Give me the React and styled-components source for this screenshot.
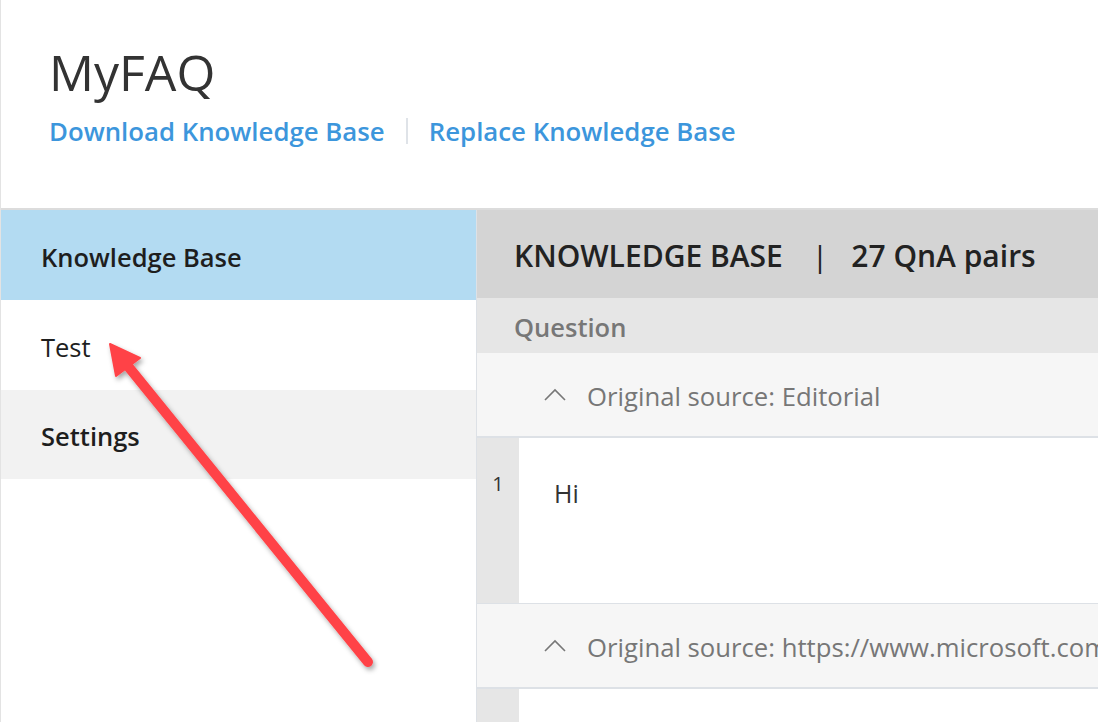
import React from "react";
import styled, { createGlobalStyle } from "styled-components";

const Global = createGlobalStyle`
  html, body { margin: 0; padding: 0; background: #fff; }
  body { font-family: "Open Sans", "Noto Sans", sans-serif; overflow: hidden; }
  * { box-sizing: border-box; }
`;

const Page = styled.div`
  position: relative;
  width: 1098px;
  height: 722px;
  overflow: hidden;
  border-left: 1px solid #e3e3e3;
  display: flex;
  flex-direction: column;
`;

const Header = styled.header`
  height: 210px;
  flex: none;
  padding: 39px 0 0 48px;
  border-bottom: 2px solid #dcdcdc;
`;

const Title = styled.h1`
  margin: 0;
  font-weight: 400;
  font-size: 50px;
  line-height: 66px;
  color: #333;
`;

const Links = styled.div`
  display: flex;
  align-items: center;
  margin-top: 8px;
  gap: 21px;
`;

const Link = styled.a`
  font-size: 25.8px;
  font-weight: 600;
  color: #3c96dc;
  text-decoration: none;
`;

const Sep = styled.span`
  width: 2px;
  height: 26px;
  background: #dfe3e8;
`;

const Body = styled.div`
  flex: 1;
  display: flex;
  min-height: 0;
`;

const Sidebar = styled.nav`
  width: 476px;
  flex: none;
  border-right: 1px solid #dde1e6;
  display: flex;
  flex-direction: column;
`;

const NavItem = styled.div`
  height: ${(p) => p.$h}px;
  display: flex;
  align-items: center;
  padding: 3px 0 0 40px;
  font-size: 25.5px;
  font-weight: ${(p) => (p.$bold ? 600 : 400)};
  color: #1e1e1e;
  background: ${(p) => p.$bg};
`;

const Main = styled.section`
  flex: 1;
  display: flex;
  flex-direction: column;
  min-width: 0;
  overflow: hidden;
`;

const TableHead = styled.div`
  height: 88px;
  flex: none;
  background: #d4d4d4;
  display: flex;
  align-items: center;
  padding: 3px 0 0 37px;
  font-size: 30px;
  font-weight: 600;
  color: #222;
  white-space: nowrap;
`;

const Pipe = styled.span`
  margin: 0 23px 0 29px;
  font-weight: 400;
`;

const ColHead = styled.div`
  height: 55px;
  flex: none;
  background: #e6e6e6;
  display: flex;
  align-items: center;
  padding: 2px 0 0 37px;
  font-size: 25.5px;
  font-weight: 600;
  color: #777;
`;

const SourceRow = styled.div`
  height: 85px;
  flex: none;
  background: #f6f6f6;
  border-bottom: 2px solid #dde1e6;
  display: flex;
  align-items: center;
  padding: 4px 0 0 67px;
  gap: 21px;
  font-size: 25.7px;
  color: #777;
  white-space: nowrap;
  overflow: hidden;
`;

const ChevronIcon = styled.svg`
  flex: none;
  margin-top: -4px;
`;

const QnaRow = styled.div`
  height: ${(p) => p.$h}px;
  flex: none;
  display: flex;
  border-bottom: ${(p) => (p.$last ? "none" : "1px solid #dde1e6")};
`;

const Gutter = styled.div`
  width: 42px;
  flex: none;
  background: #e6e6e6;
  text-align: center;
  padding-top: 32px;
  font-size: 20px;
  color: #333;
`;

const Cell = styled.div`
  flex: 1;
  padding: 38px 0 0 35px;
  font-size: 25px;
  color: #333;
`;

const ArrowSvg = styled.svg`
  position: absolute;
  left: 0;
  top: 0;
  pointer-events: none;
`;

const Chevron = () => (
  <ChevronIcon width="22" height="13" viewBox="0 0 22 13">
    <polyline points="1,12 11,2 21,12" fill="none" stroke="#777" strokeWidth="1.6" />
  </ChevronIcon>
);

export default function App() {
  return (
    <>
      <Global />
      <Page>
        <Header>
          <Title>MyFAQ</Title>
          <Links>
            <Link href="#">Download Knowledge Base</Link>
            <Sep />
            <Link href="#">Replace Knowledge Base</Link>
          </Links>
        </Header>
        <Body>
          <Sidebar>
            <NavItem $h={90} $bold $bg="#b3dbf2">Knowledge Base</NavItem>
            <NavItem $h={90} $bg="#fff">Test</NavItem>
            <NavItem $h={89} $bold $bg="#f2f2f2">Settings</NavItem>
          </Sidebar>
          <Main>
            <TableHead>
              <span>KNOWLEDGE BASE</span>
              <Pipe>|</Pipe>
              <span>27 QnA pairs</span>
            </TableHead>
            <ColHead>Question</ColHead>
            <SourceRow>
              <Chevron />
              <span>Original source: Editorial</span>
            </SourceRow>
            <QnaRow $h={166}>
              <Gutter>1</Gutter>
              <Cell>Hi</Cell>
            </QnaRow>
            <SourceRow>
              <Chevron />
              <span>Original source: https://www.microsoft.com</span>
            </SourceRow>
            <QnaRow $h={60} $last>
              <Gutter />
              <Cell />
            </QnaRow>
          </Main>
        </Body>
        <ArrowSvg width="1098" height="722" viewBox="0 0 1098 722">
          <defs>
            <filter id="sh" x="-20%" y="-20%" width="140%" height="140%">
              <feDropShadow dx="2" dy="3" stdDeviation="2.5" floodColor="#000" floodOpacity="0.35" />
            </filter>
          </defs>
          <g filter="url(#sh)">
            <line x1="367" y1="662" x2="126" y2="365" stroke="#ff4347" strokeWidth="10" strokeLinecap="round" />
            <polygon points="109,344 139,358 115,376" fill="#ff4347" stroke="#ff4347" strokeWidth="2" strokeLinejoin="round" />
          </g>
        </ArrowSvg>
      </Page>
    </>
  );
}
